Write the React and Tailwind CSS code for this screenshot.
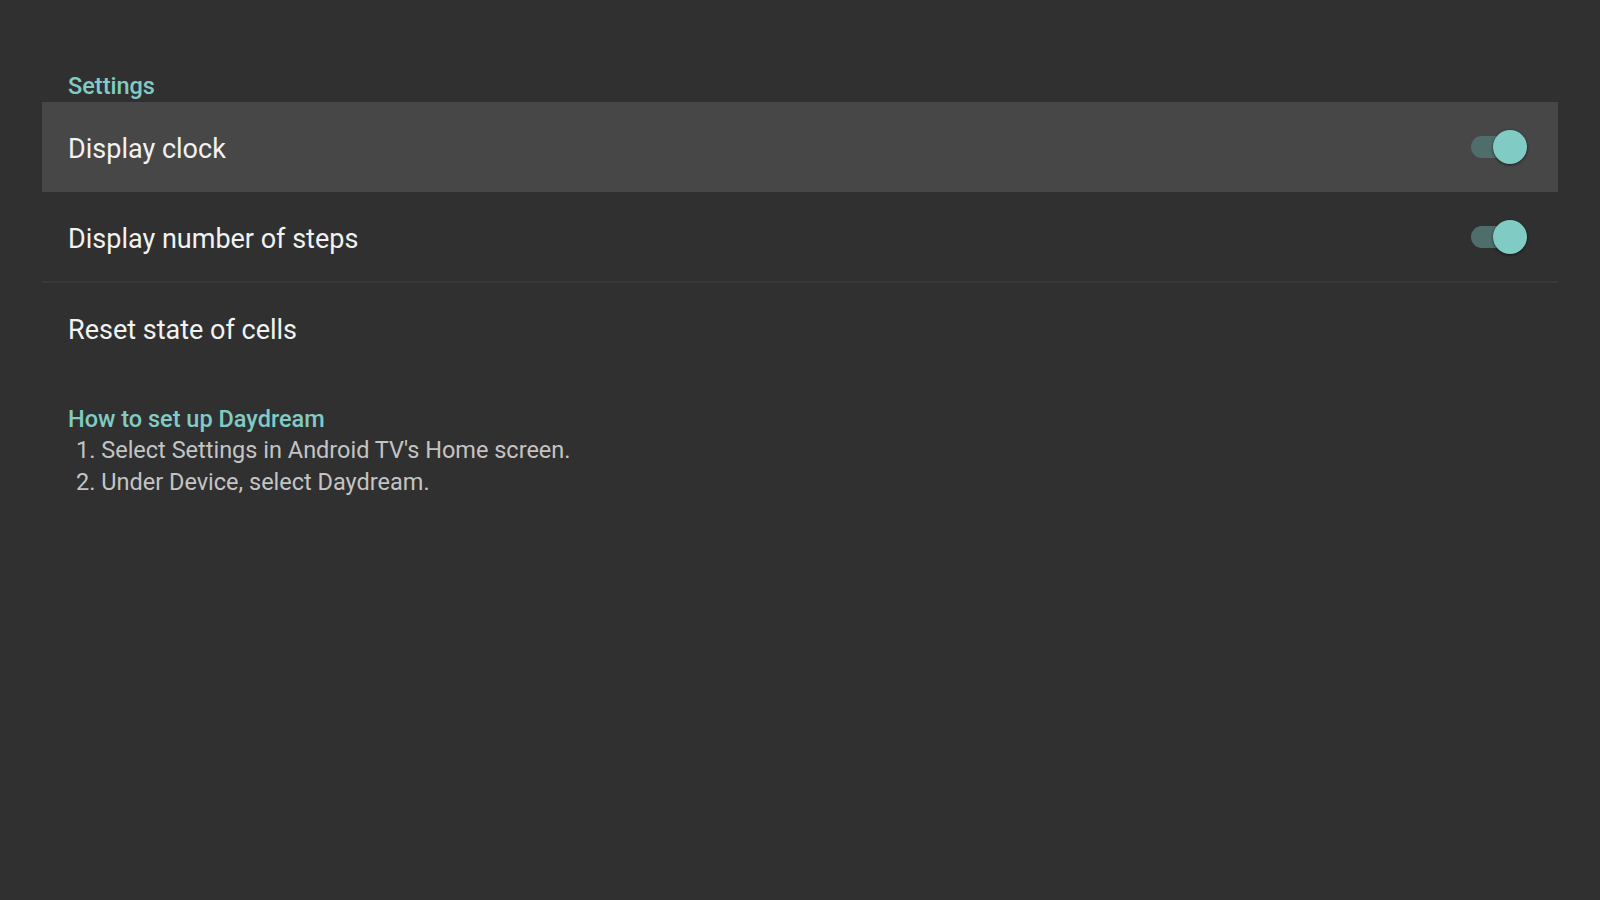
import React, { useState } from "react";

const Toggle = ({ on }) => (
  <div className="relative w-[58px] h-[36px] flex items-center">
    <div
      className={
        on
          ? "w-[52px] h-[22px] rounded-full bg-[#4f6e6b]"
          : "w-[52px] h-[22px] rounded-full bg-[#5a5a5a]"
      }
    />
    <div
      className={
        on
          ? "absolute right-[2px] top-[1px] w-[34px] h-[34px] rounded-full bg-[#80cbc4] shadow-[0_1px_3px_rgba(0,0,0,0.6)]"
          : "absolute left-0 top-[1px] w-[34px] h-[34px] rounded-full bg-[#bdbdbd] shadow-[0_1px_3px_rgba(0,0,0,0.6)]"
      }
    />
  </div>
);

const App = () => {
  const [clock, setClock] = useState(true);
  const [steps, setSteps] = useState(true);

  return (
    <div
      className="w-[1600px] h-[900px] bg-[#303030] pt-[71px] px-[42px]"
      style={{ fontFamily: "Roboto, 'Liberation Sans', sans-serif" }}
    >
      {/* Header */}
      <div className="pl-[26px] h-[31px] flex items-center text-[23.5px] font-medium text-[#80cbc4]">
        Settings
      </div>

      {/* Rows */}
      <div
        onClick={() => setClock(!clock)}
        className="h-[90px] bg-[#474747] flex items-center justify-between pl-[26px] pr-[29px]"
      >
        <span className="mt-[4px] text-[27px] text-[#f2f2f2]">Display clock</span>
        <Toggle on={clock} />
      </div>

      <div
        onClick={() => setSteps(!steps)}
        className="h-[91px] flex items-center justify-between pl-[26px] pr-[29px] border-b-2 border-[#383838]"
      >
        <span className="mt-[5px] text-[27px] text-[#f2f2f2]">Display number of steps</span>
        <Toggle on={steps} />
      </div>

      <div className="h-[92px] flex items-center pl-[26px]">
        <span className="mt-[2px] text-[27px] text-[#f2f2f2]">Reset state of cells</span>
      </div>

      {/* Help */}
      <div className="pl-[26px] pt-[28px]">
        <div className="text-[23.5px] font-medium text-[#80cbc4] leading-[32px]">
          How to set up Daydream
        </div>
        <div className="pl-[8px] text-[23.5px] text-[#c4c4c4] leading-[31.5px]">
          <div>1. Select Settings in Android TV's Home screen.</div>
          <div>2. Under Device, select Daydream.</div>
        </div>
      </div>
    </div>
  );
};

export default App;
